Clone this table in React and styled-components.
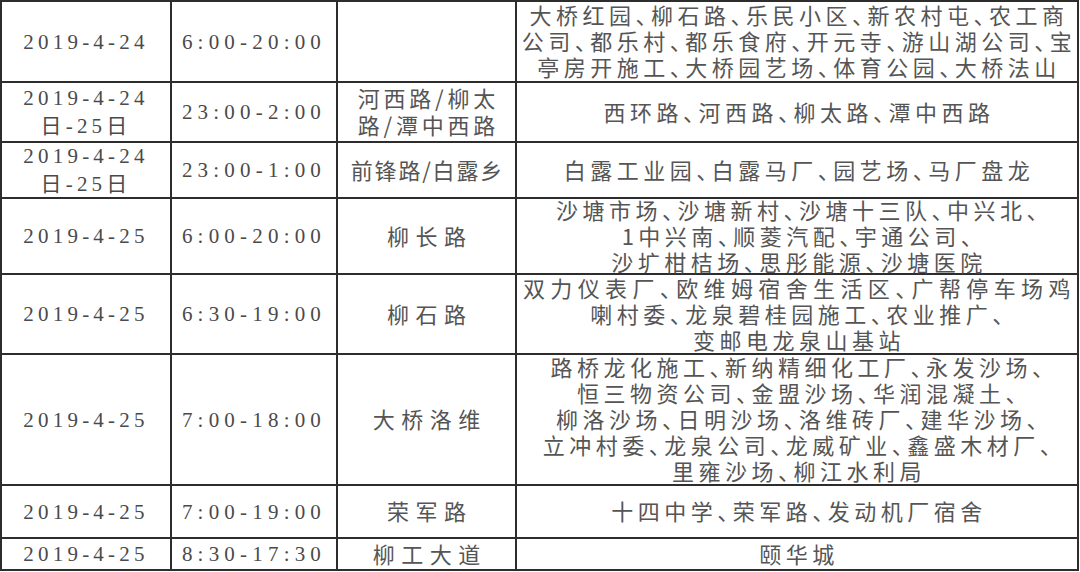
import React from 'react';
import styled, { createGlobalStyle } from 'styled-components';

const GlobalStyle = createGlobalStyle`
  html, body {
    margin: 0;
    padding: 0;
    background: #ffffff;
  }
  body {
    font-family: "Noto Sans CJK SC", sans-serif;
    color: #505050;
  }
`;

// 停电计划表数据
const rows = [
  {
    height: 79,
    date: ['2019-4-24'],
    time: '6:00-20:00',
    road: [],
    areas: [
      '大桥红园、柳石路、乐民小区、新农村屯、农工商',
      '公司、都乐村、都乐食府、开元寺、游山湖公司、宝',
      '亭房开施工、大桥园艺场、体育公园、大桥法山',
    ],
  },
  {
    height: 58,
    date: ['2019-4-24', '日-25日'],
    time: '23:00-2:00',
    road: ['河西路/柳太', '路/潭中西路'],
    roadSpacing: 3.8,
    areas: ['西环路、河西路、柳太路、潭中西路'],
  },
  {
    height: 54,
    date: ['2019-4-24', '日-25日'],
    time: '23:00-1:00',
    road: ['前锋路/白露乡'],
    roadSpacing: 1.8,
    areas: ['白露工业园、白露马厂、园艺场、马厂盘龙'],
  },
  {
    height: 74,
    date: ['2019-4-25'],
    time: '6:00-20:00',
    road: ['柳长路'],
    areas: [
      '沙塘市场、沙塘新村、沙塘十三队、中兴北、',
      '1中兴南、顺菱汽配、宇通公司、',
      '沙圹柑桔场、思彤能源、沙塘医院',
    ],
  },
  {
    height: 78,
    date: ['2019-4-25'],
    time: '6:30-19:00',
    road: ['柳石路'],
    areas: [
      { text: '双力仪表厂、欧维姆宿舍生活区、广帮停车场鸡', justify: true },
      '喇村委、龙泉碧桂园施工、农业推广、',
      '变邮电龙泉山基站',
    ],
  },
  {
    height: 129,
    date: ['2019-4-25'],
    time: '7:00-18:00',
    road: ['大桥洛维'],
    areas: [
      '路桥龙化施工、新纳精细化工厂、永发沙场、',
      '恒三物资公司、金盟沙场、华润混凝土、',
      '柳洛沙场、日明沙场、洛维砖厂、建华沙场、',
      '立冲村委、龙泉公司、龙威矿业、鑫盛木材厂、',
      '里雍沙场、柳江水利局',
    ],
  },
  {
    height: 51,
    date: ['2019-4-25'],
    time: '7:00-19:00',
    road: ['荣军路'],
    areas: ['十四中学、荣军路、发动机厂宿舍'],
  },
  {
    height: 30,
    date: ['2019-4-25'],
    time: '8:30-17:30',
    road: ['柳工大道'],
    areas: ['颐华城'],
  },
];

const App = () => {
  return (
    <>
      <GlobalStyle />
      <Table $rows={rows.map((r) => `${r.height}px`).join(' ')}>
        {rows.map((row, i) => (
          <React.Fragment key={i}>
            <DateCell>
              {row.date.map((d) => (
                <Line key={d}>{d}</Line>
              ))}
            </DateCell>
            <TimeCell>
              <Line>{row.time}</Line>
            </TimeCell>
            <RoadCell $spacing={row.roadSpacing}>
              {row.road.map((r) => (
                <Line key={r}>{r}</Line>
              ))}
            </RoadCell>
            <AreaCell>
              {row.areas.map((a) =>
                typeof a === 'string' ? (
                  <Line key={a}>{a}</Line>
                ) : (
                  <Line key={a.text} $justify={a.justify}>
                    {a.text}
                  </Line>
                )
              )}
            </AreaCell>
          </React.Fragment>
        ))}
      </Table>
    </>
  );
};

export default App;

const Table = styled.div`
  display: grid;
  grid-template-columns: 168px 164px 177px 560px;
  grid-template-rows: ${(p) => p.$rows};
  gap: 2px;
  padding: 2px;
  width: fit-content;
  background: #2d2d2d;
`;

const Cell = styled.div`
  display: flex;
  flex-direction: column;
  justify-content: center;
  align-items: center;
  background: #ffffff;
  font-size: 22px;
  line-height: 26px;
  color: #555555;
`;

const DateCell = styled(Cell)`
  font-family: "Liberation Serif", "Noto Sans CJK SC", serif;
  font-size: 21px;
  line-height: 28px;
  letter-spacing: 4.2px;
  color: #4a4a4a;
`;

const TimeCell = styled(Cell)`
  font-family: "Liberation Serif", "Noto Sans CJK SC", serif;
  font-size: 21px;
  letter-spacing: 5.2px;
  color: #4a4a4a;
`;

const RoadCell = styled(Cell)`
  letter-spacing: ${(p) => (p.$spacing != null ? p.$spacing : 6.5)}px;
  line-height: 27px;
  padding: 0 0 2px ${(p) => (p.$spacing != null ? p.$spacing : 6.5)}px;
`;

const AreaCell = styled(Cell)`
  letter-spacing: 4.5px;
  font-feature-settings: "halt";
  padding: 0 2px 3px 6px;
  box-sizing: border-box;
`;

const Line = styled.span`
  display: block;
  white-space: nowrap;
  ${(p) =>
    p.$justify &&
    `
    align-self: stretch;
    text-align: justify;
    text-align-last: justify;
  `}
`;
